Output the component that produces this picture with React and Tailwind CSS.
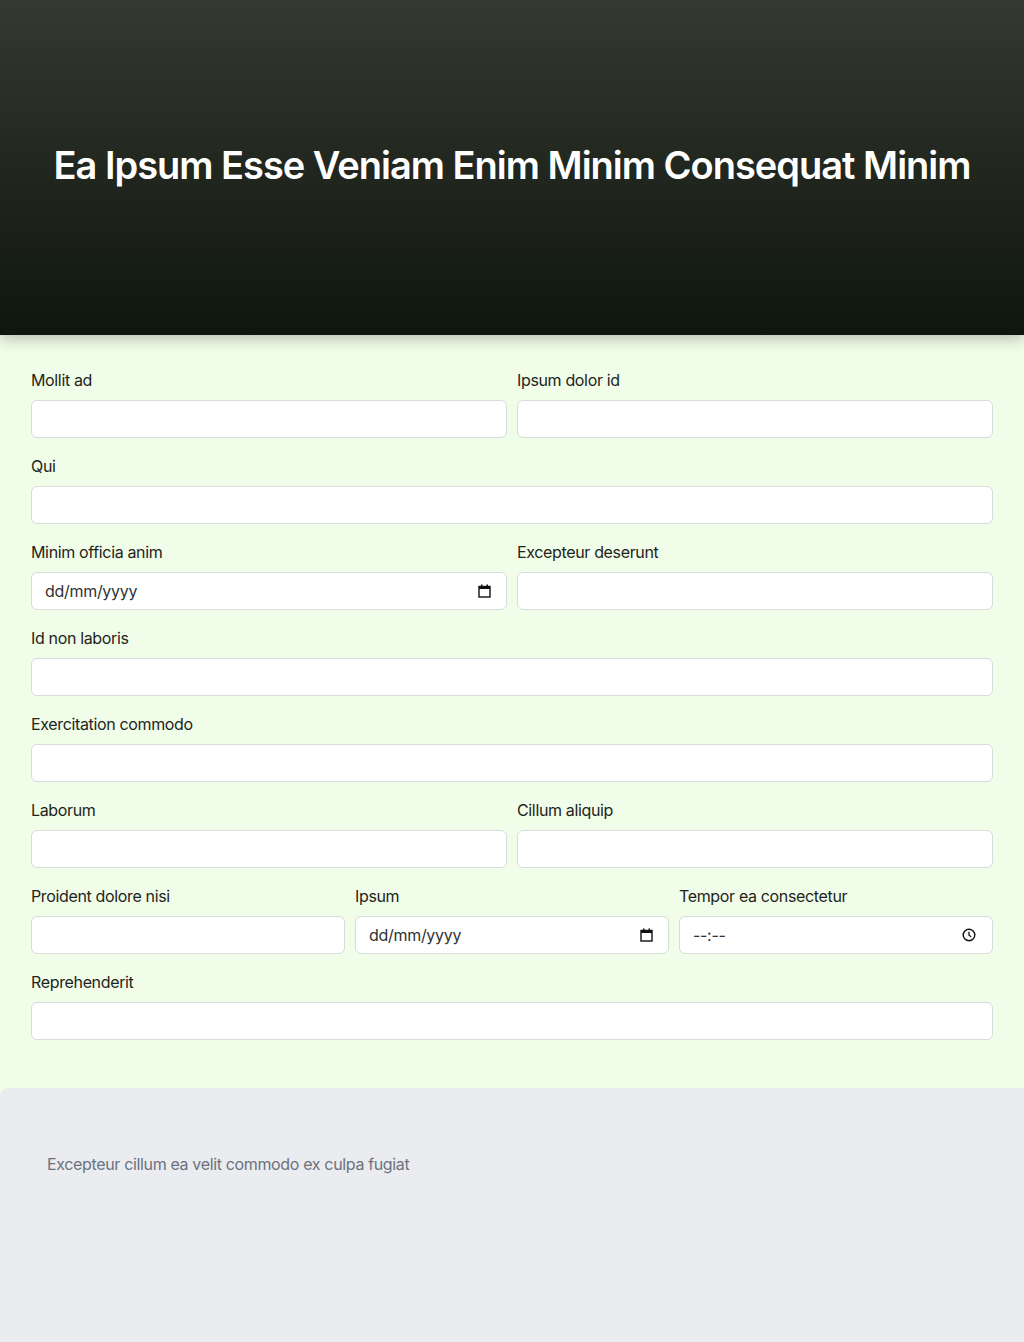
import React from "react";

const CalendarIcon = () => (
    <svg width="13" height="14" viewBox="0 0 13 14" fill="none">
        <rect x="1" y="2.5" width="11" height="10.5" stroke="#111" strokeWidth="1.4" />
        <rect x="1" y="2.5" width="11" height="2.5" fill="#111" />
        <rect x="3" y="0.5" width="1.5" height="2.5" fill="#111" />
        <rect x="8.5" y="0.5" width="1.5" height="2.5" fill="#111" />
    </svg>
);

const ClockIcon = () => (
    <svg width="14" height="14" viewBox="0 0 14 14" fill="none">
        <circle cx="7" cy="7" r="5.8" stroke="#111" strokeWidth="1.4" />
        <path d="M7 3.8V7.2L9.2 8.8" stroke="#111" strokeWidth="1.3" />
    </svg>
);

const Field = ({ label, kind, span }) => (
    <div className={`flex flex-col ${span || ""}`}>
        <label className="text-[16px] leading-6 tracking-[-0.35px] text-[#1f2421] mb-2">{label}</label>
        <div className="relative">
            <input
                type="text"
                readOnly={!!kind}
                placeholder={kind === "date" ? "dd/mm/yyyy" : kind === "time" ? "--:--" : ""}
                className="h-[38px] w-full rounded-md border border-[#d6dcd9] bg-white px-[13px] text-[16px] tracking-[-0.3px] text-[#2a2e2c] placeholder:text-[#2f3331] outline-none"
            />
            {kind === "date" && (
                <span className="absolute right-[16px] top-[12px] flex"><CalendarIcon /></span>
            )}
            {kind === "time" && (
                <span className="absolute right-[17px] top-[12px] flex"><ClockIcon /></span>
            )}
        </div>
    </div>
);

export default function App() {
    return (
        <div className="min-h-screen flex flex-col bg-[#f0fde8]" style={{ fontFamily: "Inter, 'Noto Sans', sans-serif" }}>
            <header className="relative z-10 h-[335px] flex items-center justify-center pb-[6px] bg-gradient-to-b from-[#353a31] to-[#0f160d] shadow-[0_4px_14px_rgba(0,0,0,0.25)]">
                <h1 className="text-white text-[38px] font-semibold tracking-[-1px] leading-none">
                    Ea Ipsum Esse Veniam Enim Minim Consequat Minim
                </h1>
            </header>

            <main className="px-[31px] pt-[33px] pb-[48px] flex flex-col gap-4">
                <div className="grid grid-cols-2 gap-[10px]">
                    <Field label="Mollit ad" />
                    <Field label="Ipsum dolor id" />
                </div>
                <Field label="Qui" />
                <div className="grid grid-cols-2 gap-[10px]">
                    <Field label="Minim officia anim" kind="date" />
                    <Field label="Excepteur deserunt" />
                </div>
                <Field label="Id non laboris" />
                <Field label="Exercitation commodo" />
                <div className="grid grid-cols-2 gap-[10px]">
                    <Field label="Laborum" />
                    <Field label="Cillum aliquip" />
                </div>
                <div className="grid grid-cols-3 gap-[10px]">
                    <Field label="Proident dolore nisi" />
                    <Field label="Ipsum" kind="date" />
                    <Field label="Tempor ea consectetur" kind="time" />
                </div>
                <Field label="Reprehenderit" />
            </main>

            <footer className="flex-1 bg-[#eaecef] rounded-tl-lg px-[47px] pt-[64px] pb-16">
                <p className="text-[16px] leading-6 tracking-[-0.35px] text-[#6b7280]">Excepteur cillum ea velit commodo ex culpa fugiat</p>
            </footer>
        </div>
    );
}
